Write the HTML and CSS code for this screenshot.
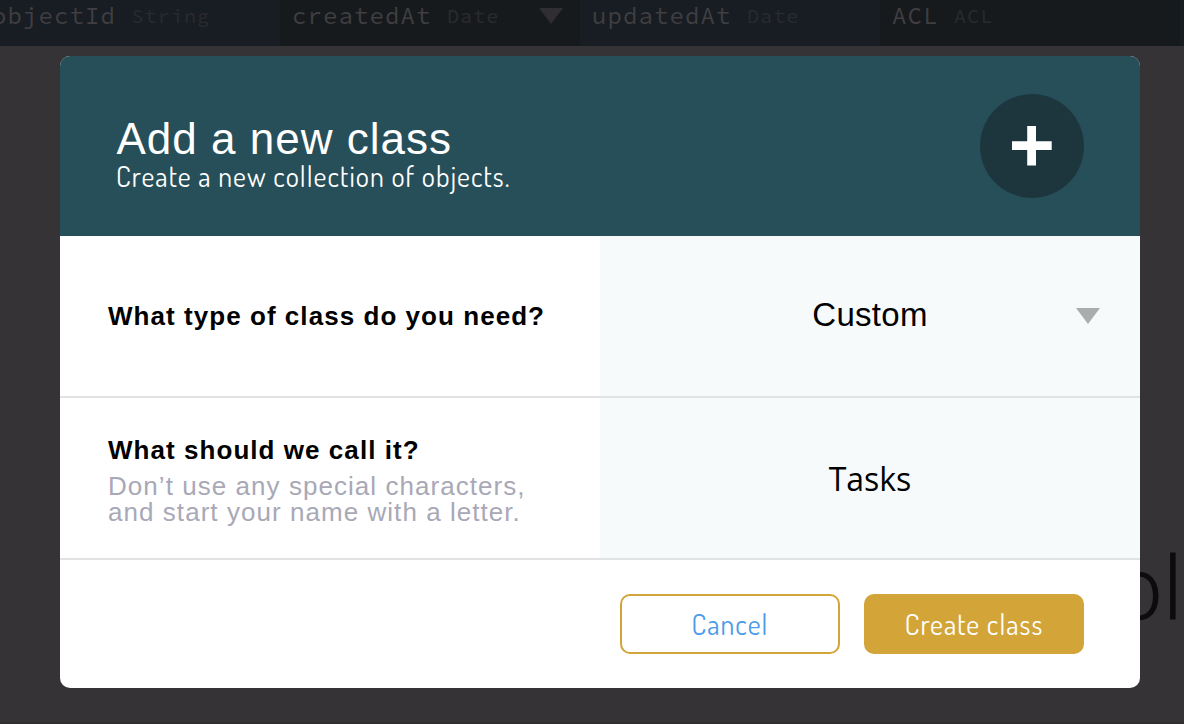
FILE: index.html
```html
<!DOCTYPE html>
<html lang="en">
<head>
<meta charset="utf-8">
<title>Add a new class</title>
<link rel="stylesheet" href="styles.css">
</head>
<body>
<div class="browser">
  <div class="columns">
    <div class="column column-id"><span class="name">objectId</span><span class="type">String</span></div>
    <div class="column dark"><span class="name">createdAt</span><span class="type">Date</span><svg class="sort" width="24" height="16" viewBox="0 0 24 16"><path d="M0 0h24L12 16z"/></svg></div>
    <div class="column"><span class="name">updatedAt</span><span class="type">Date</span></div>
    <div class="column dark"><span class="name">ACL</span><span class="type">ACL</span></div>
    <div class="column rest"></div>
  </div>
  <div class="empty">ol</div>
</div>
<main class="modal">
  <header class="header">
    <div>
      <h1 class="title">Add a new class</h1>
      <p class="subtitle">Create a new collection of objects.</p>
    </div>
    <div class="badge"><svg width="40" height="40" viewBox="0 0 40 40"><path d="M15.2 0H24v15.2h15.7V24H24v15.5h-8.8V24H0v-8.8h15.2z" fill="#fff"/></svg></div>
  </header>
  <section class="field">
    <div class="label"><h2 class="question">What type of class do you need?</h2></div>
    <div class="input"><span class="choice">Custom</span><svg class="arrow" width="24" height="16" viewBox="0 0 24 16"><path d="M0 0h24L12 16z"/></svg></div>
  </section>
  <section class="field">
    <div class="label label-tall"><h2 class="question">What should we call it?</h2><p class="hint">Don’t use any special characters,<br>and start your name with a letter.</p></div>
    <div class="input"><span class="value">Tasks</span></div>
  </section>
  <footer class="footer">
    <button class="button cancel">Cancel</button>
    <button class="button create">Create class</button>
  </footer>
</main>
</body>
</html>
```
FILE: styles.css
```css
* { box-sizing: border-box; }
body { margin: 0; width: 1184px; height: 724px; overflow: hidden; background: #363336; font-family: "Liberation Sans", Arial, sans-serif; padding: 56px 0 0 60px; }
h1, h2, p { margin: 0; }

/* Data browser behind the dialog */
.browser { position: absolute; inset: 0; overflow: hidden; border-bottom: 2px solid #302e2f; }
.columns { display: flex; height: 46px; background: #161a1d; font-family: "Source Code Pro", "Noto Sans Mono", "DejaVu Sans Mono", monospace; }
.column { width: 300px; height: 46px; padding: 3px 0 0 12px; display: flex; background: #171d22; white-space: nowrap; flex: none; line-height: 26px; }
.column-id { width: 280px; padding-left: 0; }
.column-id .name { margin-left: -8px; }
.column.dark { background: #161a1d; }
.column.rest { background: #171d20; }
.name { font-size: 24px; letter-spacing: 1.1px; color: #403e41; margin-right: 15.5px; font-weight: 400; }
.type { font-size: 20px; letter-spacing: 1.1px; color: #2b2a2e; line-height: 25px; font-weight: 400; }
.sort { fill: #302e32; margin: 5px 0 0 40px; }
.empty { position: absolute; left: 1112px; top: 525px; font: 300 87px/120px "Open Sans", sans-serif; color: #0c0b0d; -webkit-text-stroke: 1.2px #0c0b0d; }

/* Dialog */
.modal { position: relative; width: 1080px; height: 632px; border-radius: 10px; overflow: hidden; background: #fff; }
.header { height: 180px; background: #274f59; color: #fff; display: flex; justify-content: space-between; padding: 38px 56px 0; }
.title { font-size: 44px; line-height: 50px; font-weight: 400; letter-spacing: 1px; margin: 20px 0 0 .5px; white-space: nowrap; }
.subtitle { margin-top: -5px; font: 400 28px/34px "Dosis", "Lato", sans-serif; letter-spacing: 1.05px; white-space: nowrap; }
.badge { width: 104px; height: 104px; border-radius: 50%; background: #1d363e; display: flex; align-items: center; justify-content: center; }
.field { display: flex; height: 162px; border-bottom: 2px solid #e0e2e4; }
.label { width: 540px; padding-left: 48px; display: flex; flex-direction: column; justify-content: center; white-space: nowrap; }
.label-tall { padding-top: 4px; }
.question { font-size: 26px; line-height: 30px; letter-spacing: 1.05px; color: #000; }
.hint { margin-top: 8px; font-size: 26px; line-height: 26px; letter-spacing: 1.05px; color: #a9a8b7; }
.input { width: 540px; background: #f6fafb; display: flex; align-items: center; justify-content: center; position: relative; color: #000; }
.choice { font-size: 33px; letter-spacing: .3px; padding-bottom: 2px; }
.value { font-family: "Open Sans", sans-serif; font-size: 32px; }
.arrow { position: absolute; right: 40px; top: 72px; fill: #a9adae; }
.footer { height: 128px; display: flex; justify-content: flex-end; gap: 24px; padding: 34px 56px 0; }
.button { width: 220px; height: 60px; border: 2px solid #d3a538; border-radius: 10px; padding: 0 0 1px; font: 400 28px "Dosis", "Lato", sans-serif; letter-spacing: 1.05px; }
.cancel { background: #fff; color: #4b9be8; }
.create { background: #d3a538; color: #fff; }
```
